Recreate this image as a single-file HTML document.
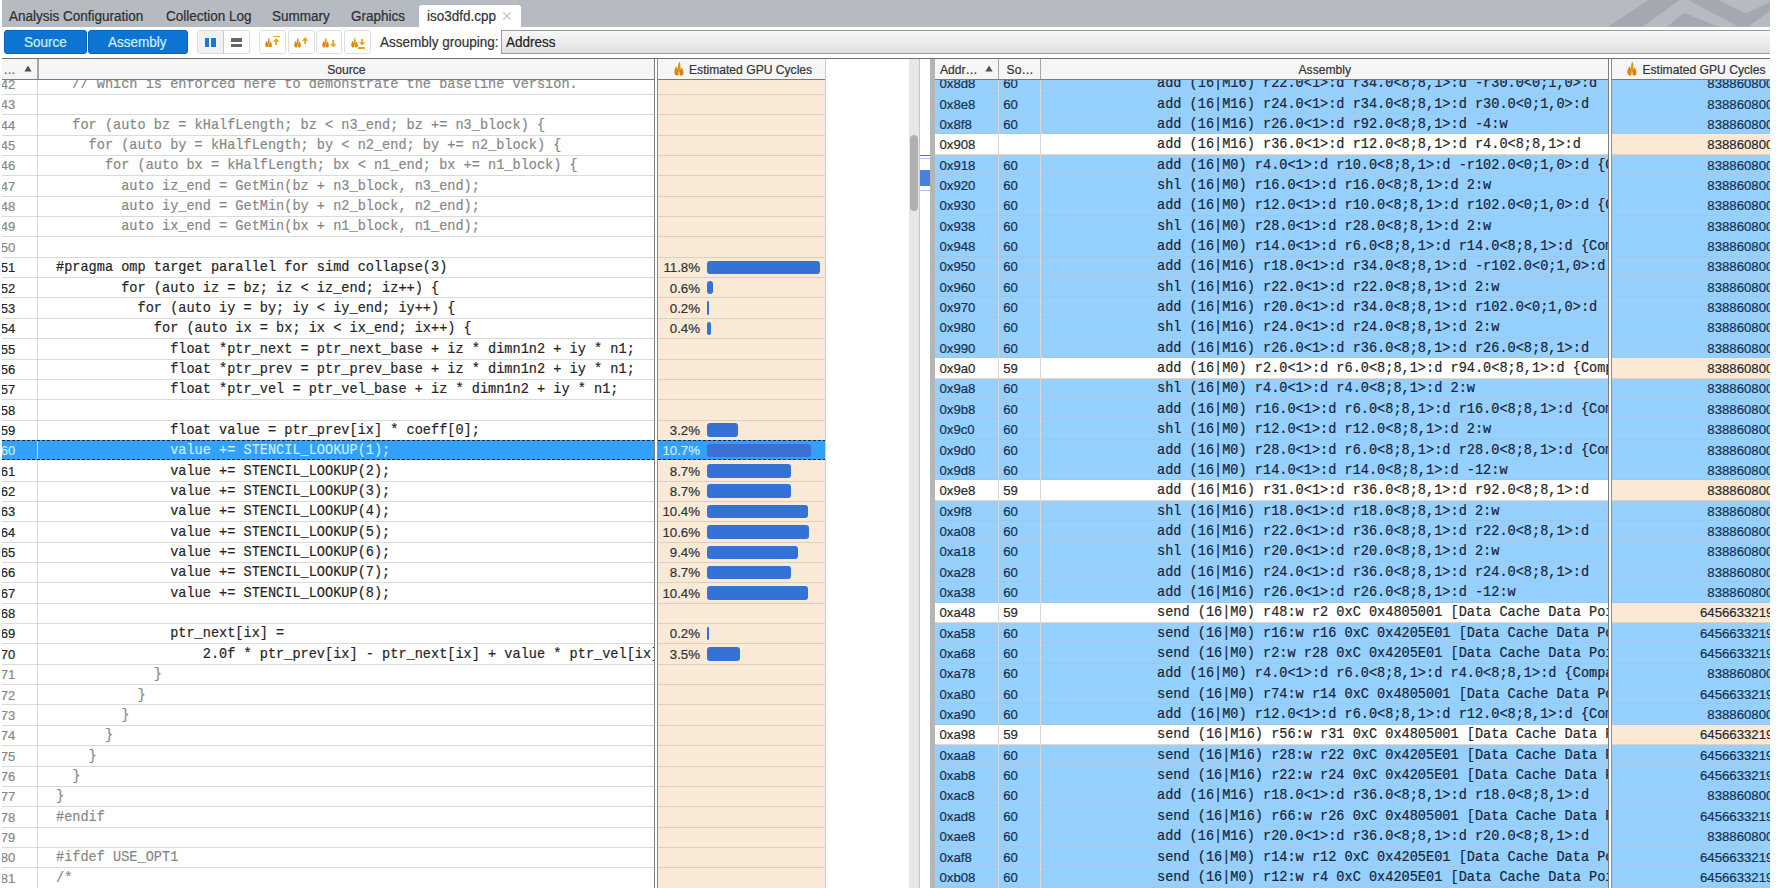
<!DOCTYPE html><html><head><meta charset="utf-8"><style>
*{margin:0;padding:0;box-sizing:border-box}
html,body{width:1776px;height:888px;overflow:hidden;background:#fff}
body{position:relative;font-family:"Liberation Sans",sans-serif;color:#333;-webkit-text-stroke-width:0.2px}
.a{position:absolute}
.t{position:absolute;white-space:pre;line-height:20px}
.m{position:absolute;white-space:pre;line-height:20px;font-family:"Liberation Mono",monospace;font-size:14.2px;transform:scaleX(0.9575);transform-origin:0 0}
.tab{position:absolute;font-size:14px;line-height:20px;color:#2c2e31;white-space:pre;transform:scaleX(0.9643);transform-origin:0 0}
.hdr{position:absolute;font-size:12.12px;color:#333;white-space:pre;line-height:20px}
</style></head><body>
<div class="a" style="left:2px;top:0;width:1768px;height:26.7px;background:#b6bac1;overflow:hidden"><svg class="a" style="left:0;top:0" width="1768" height="27" viewBox="2 0 1768 27"><polygon fill="#a4a8b0" points="1608.7,26.5 1648.4,0 1679.3,0 1642.9,26.5"/><polygon fill="#a4a8b0" points="1667.2,26.5 1683.8,12.7 1718,26.5"/><polygon fill="#a4a8b0" points="1688.2,0 1718,0 1746,13.2 1770,2 1770,11 1748,26.5 1738,26.5"/></svg></div>
<div class="tab" style="left:9.3px;top:5.6px">Analysis Configuration</div>
<div class="tab" style="left:165.5px;top:5.6px">Collection Log</div>
<div class="tab" style="left:272.3px;top:5.6px">Summary</div>
<div class="tab" style="left:351.4px;top:5.6px">Graphics</div>
<div class="a" style="left:418.7px;top:4.5px;width:102.5px;height:22.5px;background:#fff;border-radius:3px 3px 0 0"></div>
<div class="tab" style="left:426.6px;top:5.6px;color:#333">iso3dfd.cpp</div>
<svg class="a" style="left:502px;top:10.5px" width="10" height="10" viewBox="0 0 10 10"><path d="M1.3 1.3L8.7 8.7M8.7 1.3L1.3 8.7" stroke="#bdbdbd" stroke-width="1.2"/></svg>
<div class="a" style="left:3.6px;top:30.2px;width:83.4px;height:23.7px;background:#0c74d3;border:1px solid #0763b9;border-radius:3px"></div>
<div class="a" style="left:88.2px;top:30.2px;width:99.6px;height:23.7px;background:#0c74d3;border:1px solid #0763b9;border-radius:3px"></div>
<div class="tab" style="left:24.2px;top:32px;color:#d2f0ff">Source</div>
<div class="tab" style="left:108.3px;top:32px;color:#d2f0ff">Assembly</div>
<div class="a" style="left:197px;top:30px;width:53.4px;height:24px;border:1px solid #dcdcdc;border-radius:3px;background:#fff;overflow:hidden"><div class="a" style="left:0;top:0;width:26px;height:23px;background:#f1f1f1;border-right:1px solid #c9c9c9"></div></div>
<div class="a" style="left:204.5px;top:38.2px;width:4.6px;height:9px;background:#1a78d0"></div>
<div class="a" style="left:211.2px;top:38.2px;width:4.6px;height:9px;background:#1a78d0"></div>
<div class="a" style="left:231px;top:38.2px;width:11.2px;height:3.4px;background:#666"></div>
<div class="a" style="left:231px;top:43.8px;width:11.2px;height:3.4px;background:#666"></div>
<div class="a" style="left:258.8px;top:30px;width:27.1px;height:24px;border:1px solid #dfdfdf;border-radius:3px;background:#fff"></div>
<div class="a" style="left:288.3px;top:30px;width:26.3px;height:24px;border:1px solid #dfdfdf;border-radius:3px;background:#fff"></div>
<div class="a" style="left:316.3px;top:30px;width:25.9px;height:24px;border:1px solid #dfdfdf;border-radius:3px;background:#fff"></div>
<div class="a" style="left:344.4px;top:30px;width:27.0px;height:24px;border:1px solid #dfdfdf;border-radius:3px;background:#fff"></div>
<svg class="a" style="left:265.3px;top:36.6px" width="7.4" height="10.8" viewBox="0 0 11 16" preserveAspectRatio="none"><path d="M2.7 5.6C1.2 7.8 0.3 9.9 0.4 12.1C0.5 14.3 1.8 15.6 3.2 15.6C4.4 15.6 5.1 14.6 5.1 13.2C5.1 10.9 4.1 8.3 2.7 5.6Z" fill="#d58a14"/><path d="M8.1 6.6C9.6 8.8 10.3 10.9 10.2 12.7C10.1 14.5 9.1 15.6 7.8 15.6C6.6 15.6 5.8 14.6 5.8 13.2C5.8 11.3 6.8 9.2 8.1 6.6Z" fill="#d6840c"/><path d="M5.6 0.6C6.7 2.4 7.2 4.6 7 7.2C6.8 9.8 6.2 11.8 5.5 13.8C4.8 11.8 4.1 9.6 4.1 7.2C4.1 4.9 4.8 2.7 5.6 0.6Z" fill="#df9418"/><ellipse cx="5.45" cy="13.6" rx="1.1" ry="1.6" fill="#f6c45a"/></svg>
<div class="a" style="left:273px;top:35.8px;width:7px;height:1.4px;background:#e6a21a"></div>
<svg class="a" style="left:273.4px;top:37.8px" width="6.4" height="7.4" viewBox="0 0 6.4 7.4" preserveAspectRatio="none"><path d="M3.2 0L6.4 3.7H4.1V7.4H2.3V3.7H0Z" fill="#e6a21a"/></svg>
<svg class="a" style="left:293.6px;top:36.8px" width="7.4" height="10.8" viewBox="0 0 11 16" preserveAspectRatio="none"><path d="M2.7 5.6C1.2 7.8 0.3 9.9 0.4 12.1C0.5 14.3 1.8 15.6 3.2 15.6C4.4 15.6 5.1 14.6 5.1 13.2C5.1 10.9 4.1 8.3 2.7 5.6Z" fill="#d58a14"/><path d="M8.1 6.6C9.6 8.8 10.3 10.9 10.2 12.7C10.1 14.5 9.1 15.6 7.8 15.6C6.6 15.6 5.8 14.6 5.8 13.2C5.8 11.3 6.8 9.2 8.1 6.6Z" fill="#d6840c"/><path d="M5.6 0.6C6.7 2.4 7.2 4.6 7 7.2C6.8 9.8 6.2 11.8 5.5 13.8C4.8 11.8 4.1 9.6 4.1 7.2C4.1 4.9 4.8 2.7 5.6 0.6Z" fill="#df9418"/><ellipse cx="5.45" cy="13.6" rx="1.1" ry="1.6" fill="#f6c45a"/></svg>
<svg class="a" style="left:301.6px;top:37.0px" width="6.4" height="7.4" viewBox="0 0 6.4 7.4" preserveAspectRatio="none"><path d="M3.2 0L6.4 3.7H4.1V7.4H2.3V3.7H0Z" fill="#e6a21a"/></svg>
<svg class="a" style="left:322.3px;top:36.8px" width="7.4" height="10.8" viewBox="0 0 11 16" preserveAspectRatio="none"><path d="M2.7 5.6C1.2 7.8 0.3 9.9 0.4 12.1C0.5 14.3 1.8 15.6 3.2 15.6C4.4 15.6 5.1 14.6 5.1 13.2C5.1 10.9 4.1 8.3 2.7 5.6Z" fill="#d58a14"/><path d="M8.1 6.6C9.6 8.8 10.3 10.9 10.2 12.7C10.1 14.5 9.1 15.6 7.8 15.6C6.6 15.6 5.8 14.6 5.8 13.2C5.8 11.3 6.8 9.2 8.1 6.6Z" fill="#d6840c"/><path d="M5.6 0.6C6.7 2.4 7.2 4.6 7 7.2C6.8 9.8 6.2 11.8 5.5 13.8C4.8 11.8 4.1 9.6 4.1 7.2C4.1 4.9 4.8 2.7 5.6 0.6Z" fill="#df9418"/><ellipse cx="5.45" cy="13.6" rx="1.1" ry="1.6" fill="#f6c45a"/></svg>
<svg class="a" style="left:330.1px;top:39.8px" width="6.4" height="7.4" viewBox="0 0 6.4 7.4" preserveAspectRatio="none"><path d="M3.2 7.4L6.4 3.7H4.1V0H2.3V3.7H0Z" fill="#e6a21a"/></svg>
<svg class="a" style="left:350.9px;top:36.8px" width="7.4" height="10.8" viewBox="0 0 11 16" preserveAspectRatio="none"><path d="M2.7 5.6C1.2 7.8 0.3 9.9 0.4 12.1C0.5 14.3 1.8 15.6 3.2 15.6C4.4 15.6 5.1 14.6 5.1 13.2C5.1 10.9 4.1 8.3 2.7 5.6Z" fill="#d58a14"/><path d="M8.1 6.6C9.6 8.8 10.3 10.9 10.2 12.7C10.1 14.5 9.1 15.6 7.8 15.6C6.6 15.6 5.8 14.6 5.8 13.2C5.8 11.3 6.8 9.2 8.1 6.6Z" fill="#d6840c"/><path d="M5.6 0.6C6.7 2.4 7.2 4.6 7 7.2C6.8 9.8 6.2 11.8 5.5 13.8C4.8 11.8 4.1 9.6 4.1 7.2C4.1 4.9 4.8 2.7 5.6 0.6Z" fill="#df9418"/><ellipse cx="5.45" cy="13.6" rx="1.1" ry="1.6" fill="#f6c45a"/></svg>
<svg class="a" style="left:358.6px;top:39.2px" width="6.4" height="6.6" viewBox="0 0 6.4 7.4" preserveAspectRatio="none"><path d="M3.2 7.4L6.4 3.7H4.1V0H2.3V3.7H0Z" fill="#e6a21a"/></svg>
<div class="a" style="left:358.4px;top:47.2px;width:6.8px;height:1.4px;background:#e6a21a"></div>
<div class="tab" style="left:380.4px;top:32px;color:#333">Assembly grouping:</div>
<div class="a" style="left:501px;top:30px;width:1269px;height:24px;border:1px solid #9b9b9b;border-right:none;background:linear-gradient(#f8f8f8,#e0e0e0)"></div>
<div class="tab" style="left:506px;top:32px;color:#222">Address</div>
<div class="a" style="left:2px;top:58px;width:1768px;height:1px;background:#707070"></div>
<div class="a" style="left:2px;top:79.0px;width:35.50px;height:809.0px;overflow:hidden;background:#fff">
<div class="a" style="left:0;top:14.96px;width:39.5px;height:1px;background:#dadada"></div>
<div class="t" style="left:-1.3px;top:-4.00px;font-size:13px;color:#878787">42</div>
<div class="a" style="left:0;top:35.31px;width:39.5px;height:1px;background:#dadada"></div>
<div class="t" style="left:-1.3px;top:16.35px;font-size:13px;color:#878787">43</div>
<div class="a" style="left:0;top:55.66px;width:39.5px;height:1px;background:#dadada"></div>
<div class="t" style="left:-1.3px;top:36.70px;font-size:13px;color:#878787">44</div>
<div class="a" style="left:0;top:76.01px;width:39.5px;height:1px;background:#dadada"></div>
<div class="t" style="left:-1.3px;top:57.05px;font-size:13px;color:#878787">45</div>
<div class="a" style="left:0;top:96.36px;width:39.5px;height:1px;background:#dadada"></div>
<div class="t" style="left:-1.3px;top:77.40px;font-size:13px;color:#878787">46</div>
<div class="a" style="left:0;top:116.71px;width:39.5px;height:1px;background:#dadada"></div>
<div class="t" style="left:-1.3px;top:97.75px;font-size:13px;color:#878787">47</div>
<div class="a" style="left:0;top:137.06px;width:39.5px;height:1px;background:#dadada"></div>
<div class="t" style="left:-1.3px;top:118.10px;font-size:13px;color:#878787">48</div>
<div class="a" style="left:0;top:157.41px;width:39.5px;height:1px;background:#dadada"></div>
<div class="t" style="left:-1.3px;top:138.45px;font-size:13px;color:#878787">49</div>
<div class="a" style="left:0;top:177.76px;width:39.5px;height:1px;background:#dadada"></div>
<div class="t" style="left:-1.3px;top:158.80px;font-size:13px;color:#878787">50</div>
<div class="a" style="left:0;top:198.11px;width:39.5px;height:1px;background:#dadada"></div>
<div class="t" style="left:-1.3px;top:179.15px;font-size:13px;color:#252525">51</div>
<div class="a" style="left:0;top:218.46px;width:39.5px;height:1px;background:#dadada"></div>
<div class="t" style="left:-1.3px;top:199.50px;font-size:13px;color:#252525">52</div>
<div class="a" style="left:0;top:238.81px;width:39.5px;height:1px;background:#dadada"></div>
<div class="t" style="left:-1.3px;top:219.85px;font-size:13px;color:#252525">53</div>
<div class="a" style="left:0;top:259.16px;width:39.5px;height:1px;background:#dadada"></div>
<div class="t" style="left:-1.3px;top:240.20px;font-size:13px;color:#252525">54</div>
<div class="a" style="left:0;top:279.51px;width:39.5px;height:1px;background:#dadada"></div>
<div class="t" style="left:-1.3px;top:260.55px;font-size:13px;color:#252525">55</div>
<div class="a" style="left:0;top:299.86px;width:39.5px;height:1px;background:#dadada"></div>
<div class="t" style="left:-1.3px;top:280.90px;font-size:13px;color:#252525">56</div>
<div class="a" style="left:0;top:320.21px;width:39.5px;height:1px;background:#dadada"></div>
<div class="t" style="left:-1.3px;top:301.25px;font-size:13px;color:#252525">57</div>
<div class="a" style="left:0;top:340.56px;width:39.5px;height:1px;background:#dadada"></div>
<div class="t" style="left:-1.3px;top:321.60px;font-size:13px;color:#252525">58</div>
<div class="t" style="left:-1.3px;top:341.95px;font-size:13px;color:#252525">59</div>
<div class="a" style="left:0;top:361.0px;width:39.5px;height:20px;background:#33a0fb"></div>
<div class="t" style="left:-1.3px;top:362.30px;font-size:13px;color:#c9eeff">60</div>
<div class="a" style="left:0;top:401.61px;width:39.5px;height:1px;background:#dadada"></div>
<div class="t" style="left:-1.3px;top:382.65px;font-size:13px;color:#252525">61</div>
<div class="a" style="left:0;top:421.96px;width:39.5px;height:1px;background:#dadada"></div>
<div class="t" style="left:-1.3px;top:403.00px;font-size:13px;color:#252525">62</div>
<div class="a" style="left:0;top:442.31px;width:39.5px;height:1px;background:#dadada"></div>
<div class="t" style="left:-1.3px;top:423.35px;font-size:13px;color:#252525">63</div>
<div class="a" style="left:0;top:462.66px;width:39.5px;height:1px;background:#dadada"></div>
<div class="t" style="left:-1.3px;top:443.70px;font-size:13px;color:#252525">64</div>
<div class="a" style="left:0;top:483.01px;width:39.5px;height:1px;background:#dadada"></div>
<div class="t" style="left:-1.3px;top:464.05px;font-size:13px;color:#252525">65</div>
<div class="a" style="left:0;top:503.36px;width:39.5px;height:1px;background:#dadada"></div>
<div class="t" style="left:-1.3px;top:484.40px;font-size:13px;color:#252525">66</div>
<div class="a" style="left:0;top:523.71px;width:39.5px;height:1px;background:#dadada"></div>
<div class="t" style="left:-1.3px;top:504.75px;font-size:13px;color:#252525">67</div>
<div class="a" style="left:0;top:544.06px;width:39.5px;height:1px;background:#dadada"></div>
<div class="t" style="left:-1.3px;top:525.10px;font-size:13px;color:#252525">68</div>
<div class="a" style="left:0;top:564.41px;width:39.5px;height:1px;background:#dadada"></div>
<div class="t" style="left:-1.3px;top:545.45px;font-size:13px;color:#252525">69</div>
<div class="a" style="left:0;top:584.76px;width:39.5px;height:1px;background:#dadada"></div>
<div class="t" style="left:-1.3px;top:565.80px;font-size:13px;color:#252525">70</div>
<div class="a" style="left:0;top:605.11px;width:39.5px;height:1px;background:#dadada"></div>
<div class="t" style="left:-1.3px;top:586.15px;font-size:13px;color:#878787">71</div>
<div class="a" style="left:0;top:625.46px;width:39.5px;height:1px;background:#dadada"></div>
<div class="t" style="left:-1.3px;top:606.50px;font-size:13px;color:#878787">72</div>
<div class="a" style="left:0;top:645.81px;width:39.5px;height:1px;background:#dadada"></div>
<div class="t" style="left:-1.3px;top:626.85px;font-size:13px;color:#878787">73</div>
<div class="a" style="left:0;top:666.16px;width:39.5px;height:1px;background:#dadada"></div>
<div class="t" style="left:-1.3px;top:647.20px;font-size:13px;color:#878787">74</div>
<div class="a" style="left:0;top:686.51px;width:39.5px;height:1px;background:#dadada"></div>
<div class="t" style="left:-1.3px;top:667.55px;font-size:13px;color:#878787">75</div>
<div class="a" style="left:0;top:706.86px;width:39.5px;height:1px;background:#dadada"></div>
<div class="t" style="left:-1.3px;top:687.90px;font-size:13px;color:#878787">76</div>
<div class="a" style="left:0;top:727.21px;width:39.5px;height:1px;background:#dadada"></div>
<div class="t" style="left:-1.3px;top:708.25px;font-size:13px;color:#878787">77</div>
<div class="a" style="left:0;top:747.56px;width:39.5px;height:1px;background:#dadada"></div>
<div class="t" style="left:-1.3px;top:728.60px;font-size:13px;color:#878787">78</div>
<div class="a" style="left:0;top:767.91px;width:39.5px;height:1px;background:#dadada"></div>
<div class="t" style="left:-1.3px;top:748.95px;font-size:13px;color:#878787">79</div>
<div class="a" style="left:0;top:788.26px;width:39.5px;height:1px;background:#dadada"></div>
<div class="t" style="left:-1.3px;top:769.30px;font-size:13px;color:#878787">80</div>
<div class="a" style="left:0;top:808.61px;width:39.5px;height:1px;background:#dadada"></div>
<div class="t" style="left:-1.3px;top:789.65px;font-size:13px;color:#878787">81</div>
</div>
<div class="a" style="left:37.4px;top:79.0px;width:1px;height:809.0px;background:#d6d6d6"></div>
<div class="a" style="left:38.4px;top:79.0px;width:615.80px;height:809.0px;overflow:hidden;background:#fff">
<div class="a" style="left:0;top:14.96px;width:619.8000000000001px;height:1px;background:#dadada"></div>
<div class="m" style="left:18.10px;top:-5.00px;color:#878787">  // which is enforced here to demonstrate the baseline version.</div>
<div class="a" style="left:0;top:35.31px;width:619.8000000000001px;height:1px;background:#dadada"></div>
<div class="a" style="left:0;top:55.66px;width:619.8000000000001px;height:1px;background:#dadada"></div>
<div class="m" style="left:18.10px;top:35.70px;color:#878787">  for (auto bz = kHalfLength; bz &lt; n3_end; bz += n3_block) {</div>
<div class="a" style="left:0;top:76.01px;width:619.8000000000001px;height:1px;background:#dadada"></div>
<div class="m" style="left:18.10px;top:56.05px;color:#878787">    for (auto by = kHalfLength; by &lt; n2_end; by += n2_block) {</div>
<div class="a" style="left:0;top:96.36px;width:619.8000000000001px;height:1px;background:#dadada"></div>
<div class="m" style="left:18.10px;top:76.40px;color:#878787">      for (auto bx = kHalfLength; bx &lt; n1_end; bx += n1_block) {</div>
<div class="a" style="left:0;top:116.71px;width:619.8000000000001px;height:1px;background:#dadada"></div>
<div class="m" style="left:18.10px;top:96.75px;color:#878787">        auto iz_end = GetMin(bz + n3_block, n3_end);</div>
<div class="a" style="left:0;top:137.06px;width:619.8000000000001px;height:1px;background:#dadada"></div>
<div class="m" style="left:18.10px;top:117.10px;color:#878787">        auto iy_end = GetMin(by + n2_block, n2_end);</div>
<div class="a" style="left:0;top:157.41px;width:619.8000000000001px;height:1px;background:#dadada"></div>
<div class="m" style="left:18.10px;top:137.45px;color:#878787">        auto ix_end = GetMin(bx + n1_block, n1_end);</div>
<div class="a" style="left:0;top:177.76px;width:619.8000000000001px;height:1px;background:#dadada"></div>
<div class="a" style="left:0;top:198.11px;width:619.8000000000001px;height:1px;background:#dadada"></div>
<div class="m" style="left:18.10px;top:178.15px;color:#252525">#pragma omp target parallel for simd collapse(3)</div>
<div class="a" style="left:0;top:218.46px;width:619.8000000000001px;height:1px;background:#dadada"></div>
<div class="m" style="left:18.10px;top:198.50px;color:#252525">        for (auto iz = bz; iz &lt; iz_end; iz++) {</div>
<div class="a" style="left:0;top:238.81px;width:619.8000000000001px;height:1px;background:#dadada"></div>
<div class="m" style="left:18.10px;top:218.85px;color:#252525">          for (auto iy = by; iy &lt; iy_end; iy++) {</div>
<div class="a" style="left:0;top:259.16px;width:619.8000000000001px;height:1px;background:#dadada"></div>
<div class="m" style="left:18.10px;top:239.20px;color:#252525">            for (auto ix = bx; ix &lt; ix_end; ix++) {</div>
<div class="a" style="left:0;top:279.51px;width:619.8000000000001px;height:1px;background:#dadada"></div>
<div class="m" style="left:18.10px;top:259.55px;color:#252525">              float *ptr_next = ptr_next_base + iz * dimn1n2 + iy * n1;</div>
<div class="a" style="left:0;top:299.86px;width:619.8000000000001px;height:1px;background:#dadada"></div>
<div class="m" style="left:18.10px;top:279.90px;color:#252525">              float *ptr_prev = ptr_prev_base + iz * dimn1n2 + iy * n1;</div>
<div class="a" style="left:0;top:320.21px;width:619.8000000000001px;height:1px;background:#dadada"></div>
<div class="m" style="left:18.10px;top:300.25px;color:#252525">              float *ptr_vel = ptr_vel_base + iz * dimn1n2 + iy * n1;</div>
<div class="a" style="left:0;top:340.56px;width:619.8000000000001px;height:1px;background:#dadada"></div>
<div class="m" style="left:18.10px;top:340.95px;color:#252525">              float value = ptr_prev[ix] * coeff[0];</div>
<div class="a" style="left:0;top:361.0px;width:619.8000000000001px;height:20px;background:#33a0fb"></div>
<div class="m" style="left:18.10px;top:361.30px;color:#c9eeff">              value += STENCIL_LOOKUP(1);</div>
<div class="a" style="left:0;top:401.61px;width:619.8000000000001px;height:1px;background:#dadada"></div>
<div class="m" style="left:18.10px;top:381.65px;color:#252525">              value += STENCIL_LOOKUP(2);</div>
<div class="a" style="left:0;top:421.96px;width:619.8000000000001px;height:1px;background:#dadada"></div>
<div class="m" style="left:18.10px;top:402.00px;color:#252525">              value += STENCIL_LOOKUP(3);</div>
<div class="a" style="left:0;top:442.31px;width:619.8000000000001px;height:1px;background:#dadada"></div>
<div class="m" style="left:18.10px;top:422.35px;color:#252525">              value += STENCIL_LOOKUP(4);</div>
<div class="a" style="left:0;top:462.66px;width:619.8000000000001px;height:1px;background:#dadada"></div>
<div class="m" style="left:18.10px;top:442.70px;color:#252525">              value += STENCIL_LOOKUP(5);</div>
<div class="a" style="left:0;top:483.01px;width:619.8000000000001px;height:1px;background:#dadada"></div>
<div class="m" style="left:18.10px;top:463.05px;color:#252525">              value += STENCIL_LOOKUP(6);</div>
<div class="a" style="left:0;top:503.36px;width:619.8000000000001px;height:1px;background:#dadada"></div>
<div class="m" style="left:18.10px;top:483.40px;color:#252525">              value += STENCIL_LOOKUP(7);</div>
<div class="a" style="left:0;top:523.71px;width:619.8000000000001px;height:1px;background:#dadada"></div>
<div class="m" style="left:18.10px;top:503.75px;color:#252525">              value += STENCIL_LOOKUP(8);</div>
<div class="a" style="left:0;top:544.06px;width:619.8000000000001px;height:1px;background:#dadada"></div>
<div class="a" style="left:0;top:564.41px;width:619.8000000000001px;height:1px;background:#dadada"></div>
<div class="m" style="left:18.10px;top:544.45px;color:#252525">              ptr_next[ix] =</div>
<div class="a" style="left:0;top:584.76px;width:619.8000000000001px;height:1px;background:#dadada"></div>
<div class="m" style="left:18.10px;top:564.80px;color:#252525">                  2.0f * ptr_prev[ix] - ptr_next[ix] + value * ptr_vel[ix];</div>
<div class="a" style="left:0;top:605.11px;width:619.8000000000001px;height:1px;background:#dadada"></div>
<div class="m" style="left:18.10px;top:585.15px;color:#878787">            }</div>
<div class="a" style="left:0;top:625.46px;width:619.8000000000001px;height:1px;background:#dadada"></div>
<div class="m" style="left:18.10px;top:605.50px;color:#878787">          }</div>
<div class="a" style="left:0;top:645.81px;width:619.8000000000001px;height:1px;background:#dadada"></div>
<div class="m" style="left:18.10px;top:625.85px;color:#878787">        }</div>
<div class="a" style="left:0;top:666.16px;width:619.8000000000001px;height:1px;background:#dadada"></div>
<div class="m" style="left:18.10px;top:646.20px;color:#878787">      }</div>
<div class="a" style="left:0;top:686.51px;width:619.8000000000001px;height:1px;background:#dadada"></div>
<div class="m" style="left:18.10px;top:666.55px;color:#878787">    }</div>
<div class="a" style="left:0;top:706.86px;width:619.8000000000001px;height:1px;background:#dadada"></div>
<div class="m" style="left:18.10px;top:686.90px;color:#878787">  }</div>
<div class="a" style="left:0;top:727.21px;width:619.8000000000001px;height:1px;background:#dadada"></div>
<div class="m" style="left:18.10px;top:707.25px;color:#878787">}</div>
<div class="a" style="left:0;top:747.56px;width:619.8000000000001px;height:1px;background:#dadada"></div>
<div class="m" style="left:18.10px;top:727.60px;color:#878787">#endif</div>
<div class="a" style="left:0;top:767.91px;width:619.8000000000001px;height:1px;background:#dadada"></div>
<div class="a" style="left:0;top:788.26px;width:619.8000000000001px;height:1px;background:#dadada"></div>
<div class="m" style="left:18.10px;top:768.30px;color:#878787">#ifdef USE_OPT1</div>
<div class="a" style="left:0;top:808.61px;width:619.8000000000001px;height:1px;background:#dadada"></div>
<div class="m" style="left:18.10px;top:788.65px;color:#878787">/*</div>
</div>
<div class="a" style="left:654.2px;top:59.0px;width:1px;height:829.0px;background:#7c7c7c"></div>
<div class="a" style="left:657.2px;top:59.0px;width:1px;height:829.0px;background:#8e8e8e"></div>
<div class="a" style="left:658.2px;top:79.0px;width:166.80px;height:809.0px;overflow:hidden;background:#f9e9d7">
<div class="a" style="left:0;top:14.96px;width:170.79999999999995px;height:1px;background:#dfd0bd"></div>
<div class="a" style="left:0;top:35.31px;width:170.79999999999995px;height:1px;background:#dfd0bd"></div>
<div class="a" style="left:0;top:55.66px;width:170.79999999999995px;height:1px;background:#dfd0bd"></div>
<div class="a" style="left:0;top:76.01px;width:170.79999999999995px;height:1px;background:#dfd0bd"></div>
<div class="a" style="left:0;top:96.36px;width:170.79999999999995px;height:1px;background:#dfd0bd"></div>
<div class="a" style="left:0;top:116.71px;width:170.79999999999995px;height:1px;background:#dfd0bd"></div>
<div class="a" style="left:0;top:137.06px;width:170.79999999999995px;height:1px;background:#dfd0bd"></div>
<div class="a" style="left:0;top:157.41px;width:170.79999999999995px;height:1px;background:#dfd0bd"></div>
<div class="a" style="left:0;top:177.76px;width:170.79999999999995px;height:1px;background:#dfd0bd"></div>
<div class="a" style="left:0;top:198.11px;width:170.79999999999995px;height:1px;background:#dfd0bd"></div>
<div class="t" style="left:-20px;width:61.8px;text-align:right;top:179.15px;font-size:13.25px;color:#333">11.8%</div><div class="a" style="left:48.5px;top:181.61px;width:113.3px;height:13.4px;background:#3572d5;border-radius:3px"></div>
<div class="a" style="left:0;top:218.46px;width:170.79999999999995px;height:1px;background:#dfd0bd"></div>
<div class="t" style="left:-20px;width:61.8px;text-align:right;top:199.50px;font-size:13.25px;color:#333">0.6%</div><div class="a" style="left:48.5px;top:201.96px;width:6.6px;height:13.4px;background:#3572d5;border-radius:3px"></div>
<div class="a" style="left:0;top:238.81px;width:170.79999999999995px;height:1px;background:#dfd0bd"></div>
<div class="t" style="left:-20px;width:61.8px;text-align:right;top:219.85px;font-size:13.25px;color:#333">0.2%</div><div class="a" style="left:48.5px;top:222.31px;width:2.0px;height:13.4px;background:#3572d5;border-radius:3px"></div>
<div class="a" style="left:0;top:259.16px;width:170.79999999999995px;height:1px;background:#dfd0bd"></div>
<div class="t" style="left:-20px;width:61.8px;text-align:right;top:240.20px;font-size:13.25px;color:#333">0.4%</div><div class="a" style="left:48.5px;top:242.66px;width:4.0px;height:13.4px;background:#3572d5;border-radius:3px"></div>
<div class="a" style="left:0;top:279.51px;width:170.79999999999995px;height:1px;background:#dfd0bd"></div>
<div class="a" style="left:0;top:299.86px;width:170.79999999999995px;height:1px;background:#dfd0bd"></div>
<div class="a" style="left:0;top:320.21px;width:170.79999999999995px;height:1px;background:#dfd0bd"></div>
<div class="a" style="left:0;top:340.56px;width:170.79999999999995px;height:1px;background:#dfd0bd"></div>
<div class="t" style="left:-20px;width:61.8px;text-align:right;top:341.95px;font-size:13.25px;color:#333">3.2%</div><div class="a" style="left:48.5px;top:344.41px;width:30.9px;height:13.4px;background:#3572d5;border-radius:3px"></div>
<div class="a" style="left:0;top:361.0px;width:170.79999999999995px;height:20px;background:#33a0fb"></div>
<div class="t" style="left:-20px;width:61.8px;text-align:right;top:362.30px;font-size:13.25px;color:#c9eeff">10.7%</div><div class="a" style="left:48.5px;top:364.76px;width:104.3px;height:13.4px;background:#3c70d2;border-radius:3px"></div>
<div class="a" style="left:0;top:401.61px;width:170.79999999999995px;height:1px;background:#dfd0bd"></div>
<div class="t" style="left:-20px;width:61.8px;text-align:right;top:382.65px;font-size:13.25px;color:#333">8.7%</div><div class="a" style="left:48.5px;top:385.11px;width:84.3px;height:13.4px;background:#3572d5;border-radius:3px"></div>
<div class="a" style="left:0;top:421.96px;width:170.79999999999995px;height:1px;background:#dfd0bd"></div>
<div class="t" style="left:-20px;width:61.8px;text-align:right;top:403.00px;font-size:13.25px;color:#333">8.7%</div><div class="a" style="left:48.5px;top:405.46px;width:84.3px;height:13.4px;background:#3572d5;border-radius:3px"></div>
<div class="a" style="left:0;top:442.31px;width:170.79999999999995px;height:1px;background:#dfd0bd"></div>
<div class="t" style="left:-20px;width:61.8px;text-align:right;top:423.35px;font-size:13.25px;color:#333">10.4%</div><div class="a" style="left:48.5px;top:425.81px;width:101.8px;height:13.4px;background:#3572d5;border-radius:3px"></div>
<div class="a" style="left:0;top:462.66px;width:170.79999999999995px;height:1px;background:#dfd0bd"></div>
<div class="t" style="left:-20px;width:61.8px;text-align:right;top:443.70px;font-size:13.25px;color:#333">10.6%</div><div class="a" style="left:48.5px;top:446.16px;width:102.4px;height:13.4px;background:#3572d5;border-radius:3px"></div>
<div class="a" style="left:0;top:483.01px;width:170.79999999999995px;height:1px;background:#dfd0bd"></div>
<div class="t" style="left:-20px;width:61.8px;text-align:right;top:464.05px;font-size:13.25px;color:#333">9.4%</div><div class="a" style="left:48.5px;top:466.51px;width:91.8px;height:13.4px;background:#3572d5;border-radius:3px"></div>
<div class="a" style="left:0;top:503.36px;width:170.79999999999995px;height:1px;background:#dfd0bd"></div>
<div class="t" style="left:-20px;width:61.8px;text-align:right;top:484.40px;font-size:13.25px;color:#333">8.7%</div><div class="a" style="left:48.5px;top:486.86px;width:84.3px;height:13.4px;background:#3572d5;border-radius:3px"></div>
<div class="a" style="left:0;top:523.71px;width:170.79999999999995px;height:1px;background:#dfd0bd"></div>
<div class="t" style="left:-20px;width:61.8px;text-align:right;top:504.75px;font-size:13.25px;color:#333">10.4%</div><div class="a" style="left:48.5px;top:507.21px;width:101.8px;height:13.4px;background:#3572d5;border-radius:3px"></div>
<div class="a" style="left:0;top:544.06px;width:170.79999999999995px;height:1px;background:#dfd0bd"></div>
<div class="a" style="left:0;top:564.41px;width:170.79999999999995px;height:1px;background:#dfd0bd"></div>
<div class="t" style="left:-20px;width:61.8px;text-align:right;top:545.45px;font-size:13.25px;color:#333">0.2%</div><div class="a" style="left:48.5px;top:547.91px;width:2.0px;height:13.4px;background:#3572d5;border-radius:3px"></div>
<div class="a" style="left:0;top:584.76px;width:170.79999999999995px;height:1px;background:#dfd0bd"></div>
<div class="t" style="left:-20px;width:61.8px;text-align:right;top:565.80px;font-size:13.25px;color:#333">3.5%</div><div class="a" style="left:48.5px;top:568.26px;width:33.3px;height:13.4px;background:#3572d5;border-radius:3px"></div>
<div class="a" style="left:0;top:605.11px;width:170.79999999999995px;height:1px;background:#dfd0bd"></div>
<div class="a" style="left:0;top:625.46px;width:170.79999999999995px;height:1px;background:#dfd0bd"></div>
<div class="a" style="left:0;top:645.81px;width:170.79999999999995px;height:1px;background:#dfd0bd"></div>
<div class="a" style="left:0;top:666.16px;width:170.79999999999995px;height:1px;background:#dfd0bd"></div>
<div class="a" style="left:0;top:686.51px;width:170.79999999999995px;height:1px;background:#dfd0bd"></div>
<div class="a" style="left:0;top:706.86px;width:170.79999999999995px;height:1px;background:#dfd0bd"></div>
<div class="a" style="left:0;top:727.21px;width:170.79999999999995px;height:1px;background:#dfd0bd"></div>
<div class="a" style="left:0;top:747.56px;width:170.79999999999995px;height:1px;background:#dfd0bd"></div>
<div class="a" style="left:0;top:767.91px;width:170.79999999999995px;height:1px;background:#dfd0bd"></div>
<div class="a" style="left:0;top:788.26px;width:170.79999999999995px;height:1px;background:#dfd0bd"></div>
<div class="a" style="left:0;top:808.61px;width:170.79999999999995px;height:1px;background:#dfd0bd"></div>
</div>
<div class="a" style="left:825px;top:59.0px;width:1px;height:829.0px;background:#cdcdcd"></div>
<div class="a" style="left:2px;top:440px;width:652.2px;height:1px;background:repeating-linear-gradient(90deg,#15263a 0 3px,transparent 3px 5px)"></div>
<div class="a" style="left:658.2px;top:440px;width:166.8px;height:1px;background:repeating-linear-gradient(90deg,#15263a 0 3px,transparent 3px 5px)"></div>
<div class="a" style="left:2px;top:459px;width:652.2px;height:1px;background:repeating-linear-gradient(90deg,#15263a 0 3px,transparent 3px 5px)"></div>
<div class="a" style="left:658.2px;top:459px;width:166.8px;height:1px;background:repeating-linear-gradient(90deg,#15263a 0 3px,transparent 3px 5px)"></div>
<div class="a" style="left:2px;top:59.0px;width:652.2px;height:21.0px;background:#f5f5f5;border-bottom:1px solid #7c7c7c"></div>
<div class="a" style="left:658.2px;top:59.0px;width:166.8px;height:21.0px;background:#f5f5f5;border-bottom:1px solid #7c7c7c"></div>
<div class="a" style="left:37.2px;top:59.0px;width:1.4px;height:20.0px;background:#a6a6a6"></div>
<div class="hdr" style="left:3.5px;top:60px;color:#666">…</div>
<svg class="a" style="left:24px;top:65.4px" width="8" height="7" viewBox="0 0 8 7"><path d="M4 0.4L7.6 6.6H0.4Z" fill="#505050"/></svg>
<div class="hdr" style="left:38.4px;width:616px;text-align:center;top:60px">Source</div>
<svg class="a" style="left:674.2px;top:60.8px" width="10.2" height="15" viewBox="0 0 11 16" preserveAspectRatio="none"><path d="M2.7 5.6C1.2 7.8 0.3 9.9 0.4 12.1C0.5 14.3 1.8 15.6 3.2 15.6C4.4 15.6 5.1 14.6 5.1 13.2C5.1 10.9 4.1 8.3 2.7 5.6Z" fill="#d58a14"/><path d="M8.1 6.6C9.6 8.8 10.3 10.9 10.2 12.7C10.1 14.5 9.1 15.6 7.8 15.6C6.6 15.6 5.8 14.6 5.8 13.2C5.8 11.3 6.8 9.2 8.1 6.6Z" fill="#d6840c"/><path d="M5.6 0.6C6.7 2.4 7.2 4.6 7 7.2C6.8 9.8 6.2 11.8 5.5 13.8C4.8 11.8 4.1 9.6 4.1 7.2C4.1 4.9 4.8 2.7 5.6 0.6Z" fill="#df9418"/><ellipse cx="5.45" cy="13.6" rx="1.1" ry="1.6" fill="#f6c45a"/></svg>
<div class="hdr" style="left:689px;top:60px">Estimated GPU Cycles</div>
<div class="a" style="left:909px;top:59.0px;width:10.5px;height:829.0px;background:#e7e7e7"></div>
<div class="a" style="left:918.8px;top:59.0px;width:1px;height:829.0px;background:#c4c4c4"></div>
<div class="a" style="left:909.6px;top:135px;width:8.8px;height:76px;background:#b0b0b0;border-radius:4.4px"></div>
<div class="a" style="left:920px;top:154.5px;width:10px;height:1.6px;background:#3a6fd6"></div>
<div class="a" style="left:920px;top:157.6px;width:10px;height:1.4px;background:#afcbf0"></div>
<div class="a" style="left:920px;top:169.5px;width:10px;height:16.5px;background:#4a80de"></div>
<div class="a" style="left:920px;top:189.6px;width:10px;height:1.4px;background:#b4c4ee"></div>
<div class="a" style="left:930px;top:59.0px;width:5px;height:829.0px;background:#b5b5b5"></div>
<div class="a" style="left:935px;top:79.0px;width:63.20px;height:809.0px;overflow:hidden;background:#96d0ff">
<div class="a" style="left:0;top:13.75px;width:67.20000000000005px;height:1px;background:#a2c6e6"></div>
<div class="t" style="left:4.5px;top:-4.80px;font-size:13.2px;color:#14304f">0x8d8</div>
<div class="a" style="left:0;top:34.10px;width:67.20000000000005px;height:1px;background:#a2c6e6"></div>
<div class="t" style="left:4.5px;top:15.55px;font-size:13.2px;color:#14304f">0x8e8</div>
<div class="a" style="left:0;top:54.45px;width:67.20000000000005px;height:1px;background:#a2c6e6"></div>
<div class="t" style="left:4.5px;top:35.90px;font-size:13.2px;color:#14304f">0x8f8</div>
<div class="a" style="left:0;top:55.45px;width:67.20000000000005px;height:20.35px;background:#fff"></div>
<div class="a" style="left:0;top:74.80px;width:67.20000000000005px;height:1px;background:#dadada"></div>
<div class="t" style="left:4.5px;top:56.25px;font-size:13.2px;color:#2a2a2a">0x908</div>
<div class="a" style="left:0;top:95.15px;width:67.20000000000005px;height:1px;background:#a2c6e6"></div>
<div class="t" style="left:4.5px;top:76.60px;font-size:13.2px;color:#14304f">0x918</div>
<div class="a" style="left:0;top:115.50px;width:67.20000000000005px;height:1px;background:#a2c6e6"></div>
<div class="t" style="left:4.5px;top:96.95px;font-size:13.2px;color:#14304f">0x920</div>
<div class="a" style="left:0;top:135.85px;width:67.20000000000005px;height:1px;background:#a2c6e6"></div>
<div class="t" style="left:4.5px;top:117.30px;font-size:13.2px;color:#14304f">0x930</div>
<div class="a" style="left:0;top:156.20px;width:67.20000000000005px;height:1px;background:#a2c6e6"></div>
<div class="t" style="left:4.5px;top:137.65px;font-size:13.2px;color:#14304f">0x938</div>
<div class="a" style="left:0;top:176.55px;width:67.20000000000005px;height:1px;background:#a2c6e6"></div>
<div class="t" style="left:4.5px;top:158.00px;font-size:13.2px;color:#14304f">0x948</div>
<div class="a" style="left:0;top:196.90px;width:67.20000000000005px;height:1px;background:#a2c6e6"></div>
<div class="t" style="left:4.5px;top:178.35px;font-size:13.2px;color:#14304f">0x950</div>
<div class="a" style="left:0;top:217.25px;width:67.20000000000005px;height:1px;background:#a2c6e6"></div>
<div class="t" style="left:4.5px;top:198.70px;font-size:13.2px;color:#14304f">0x960</div>
<div class="a" style="left:0;top:237.60px;width:67.20000000000005px;height:1px;background:#a2c6e6"></div>
<div class="t" style="left:4.5px;top:219.05px;font-size:13.2px;color:#14304f">0x970</div>
<div class="a" style="left:0;top:257.95px;width:67.20000000000005px;height:1px;background:#a2c6e6"></div>
<div class="t" style="left:4.5px;top:239.40px;font-size:13.2px;color:#14304f">0x980</div>
<div class="a" style="left:0;top:278.30px;width:67.20000000000005px;height:1px;background:#a2c6e6"></div>
<div class="t" style="left:4.5px;top:259.75px;font-size:13.2px;color:#14304f">0x990</div>
<div class="a" style="left:0;top:279.30px;width:67.20000000000005px;height:20.35px;background:#fff"></div>
<div class="a" style="left:0;top:298.65px;width:67.20000000000005px;height:1px;background:#dadada"></div>
<div class="t" style="left:4.5px;top:280.10px;font-size:13.2px;color:#2a2a2a">0x9a0</div>
<div class="a" style="left:0;top:319.00px;width:67.20000000000005px;height:1px;background:#a2c6e6"></div>
<div class="t" style="left:4.5px;top:300.45px;font-size:13.2px;color:#14304f">0x9a8</div>
<div class="a" style="left:0;top:339.35px;width:67.20000000000005px;height:1px;background:#a2c6e6"></div>
<div class="t" style="left:4.5px;top:320.80px;font-size:13.2px;color:#14304f">0x9b8</div>
<div class="a" style="left:0;top:359.70px;width:67.20000000000005px;height:1px;background:#a2c6e6"></div>
<div class="t" style="left:4.5px;top:341.15px;font-size:13.2px;color:#14304f">0x9c0</div>
<div class="a" style="left:0;top:380.05px;width:67.20000000000005px;height:1px;background:#a2c6e6"></div>
<div class="t" style="left:4.5px;top:361.50px;font-size:13.2px;color:#14304f">0x9d0</div>
<div class="a" style="left:0;top:400.40px;width:67.20000000000005px;height:1px;background:#a2c6e6"></div>
<div class="t" style="left:4.5px;top:381.85px;font-size:13.2px;color:#14304f">0x9d8</div>
<div class="a" style="left:0;top:401.40px;width:67.20000000000005px;height:20.35px;background:#fff"></div>
<div class="a" style="left:0;top:420.75px;width:67.20000000000005px;height:1px;background:#dadada"></div>
<div class="t" style="left:4.5px;top:402.20px;font-size:13.2px;color:#2a2a2a">0x9e8</div>
<div class="a" style="left:0;top:441.10px;width:67.20000000000005px;height:1px;background:#a2c6e6"></div>
<div class="t" style="left:4.5px;top:422.55px;font-size:13.2px;color:#14304f">0x9f8</div>
<div class="a" style="left:0;top:461.45px;width:67.20000000000005px;height:1px;background:#a2c6e6"></div>
<div class="t" style="left:4.5px;top:442.90px;font-size:13.2px;color:#14304f">0xa08</div>
<div class="a" style="left:0;top:481.80px;width:67.20000000000005px;height:1px;background:#a2c6e6"></div>
<div class="t" style="left:4.5px;top:463.25px;font-size:13.2px;color:#14304f">0xa18</div>
<div class="a" style="left:0;top:502.15px;width:67.20000000000005px;height:1px;background:#a2c6e6"></div>
<div class="t" style="left:4.5px;top:483.60px;font-size:13.2px;color:#14304f">0xa28</div>
<div class="a" style="left:0;top:522.50px;width:67.20000000000005px;height:1px;background:#a2c6e6"></div>
<div class="t" style="left:4.5px;top:503.95px;font-size:13.2px;color:#14304f">0xa38</div>
<div class="a" style="left:0;top:523.50px;width:67.20000000000005px;height:20.35px;background:#fff"></div>
<div class="a" style="left:0;top:542.85px;width:67.20000000000005px;height:1px;background:#dadada"></div>
<div class="t" style="left:4.5px;top:524.30px;font-size:13.2px;color:#2a2a2a">0xa48</div>
<div class="a" style="left:0;top:563.20px;width:67.20000000000005px;height:1px;background:#a2c6e6"></div>
<div class="t" style="left:4.5px;top:544.65px;font-size:13.2px;color:#14304f">0xa58</div>
<div class="a" style="left:0;top:583.55px;width:67.20000000000005px;height:1px;background:#a2c6e6"></div>
<div class="t" style="left:4.5px;top:565.00px;font-size:13.2px;color:#14304f">0xa68</div>
<div class="a" style="left:0;top:603.90px;width:67.20000000000005px;height:1px;background:#a2c6e6"></div>
<div class="t" style="left:4.5px;top:585.35px;font-size:13.2px;color:#14304f">0xa78</div>
<div class="a" style="left:0;top:624.25px;width:67.20000000000005px;height:1px;background:#a2c6e6"></div>
<div class="t" style="left:4.5px;top:605.70px;font-size:13.2px;color:#14304f">0xa80</div>
<div class="a" style="left:0;top:644.60px;width:67.20000000000005px;height:1px;background:#a2c6e6"></div>
<div class="t" style="left:4.5px;top:626.05px;font-size:13.2px;color:#14304f">0xa90</div>
<div class="a" style="left:0;top:645.60px;width:67.20000000000005px;height:20.35px;background:#fff"></div>
<div class="a" style="left:0;top:664.95px;width:67.20000000000005px;height:1px;background:#dadada"></div>
<div class="t" style="left:4.5px;top:646.40px;font-size:13.2px;color:#2a2a2a">0xa98</div>
<div class="a" style="left:0;top:685.30px;width:67.20000000000005px;height:1px;background:#a2c6e6"></div>
<div class="t" style="left:4.5px;top:666.75px;font-size:13.2px;color:#14304f">0xaa8</div>
<div class="a" style="left:0;top:705.65px;width:67.20000000000005px;height:1px;background:#a2c6e6"></div>
<div class="t" style="left:4.5px;top:687.10px;font-size:13.2px;color:#14304f">0xab8</div>
<div class="a" style="left:0;top:726.00px;width:67.20000000000005px;height:1px;background:#a2c6e6"></div>
<div class="t" style="left:4.5px;top:707.45px;font-size:13.2px;color:#14304f">0xac8</div>
<div class="a" style="left:0;top:746.35px;width:67.20000000000005px;height:1px;background:#a2c6e6"></div>
<div class="t" style="left:4.5px;top:727.80px;font-size:13.2px;color:#14304f">0xad8</div>
<div class="a" style="left:0;top:766.70px;width:67.20000000000005px;height:1px;background:#a2c6e6"></div>
<div class="t" style="left:4.5px;top:748.15px;font-size:13.2px;color:#14304f">0xae8</div>
<div class="a" style="left:0;top:787.05px;width:67.20000000000005px;height:1px;background:#a2c6e6"></div>
<div class="t" style="left:4.5px;top:768.50px;font-size:13.2px;color:#14304f">0xaf8</div>
<div class="a" style="left:0;top:807.40px;width:67.20000000000005px;height:1px;background:#a2c6e6"></div>
<div class="t" style="left:4.5px;top:788.85px;font-size:13.2px;color:#14304f">0xb08</div>
</div>
<div class="a" style="left:998.2px;top:79.0px;width:1px;height:809.0px;background:rgba(190,190,190,0.6)"></div>
<div class="a" style="left:999.2px;top:79.0px;width:41.00px;height:809.0px;overflow:hidden;background:#96d0ff">
<div class="a" style="left:0;top:13.75px;width:45.0px;height:1px;background:#a2c6e6"></div>
<div class="t" style="left:4px;top:-4.80px;font-size:13.2px;color:#14304f">60</div>
<div class="a" style="left:0;top:34.10px;width:45.0px;height:1px;background:#a2c6e6"></div>
<div class="t" style="left:4px;top:15.55px;font-size:13.2px;color:#14304f">60</div>
<div class="a" style="left:0;top:54.45px;width:45.0px;height:1px;background:#a2c6e6"></div>
<div class="t" style="left:4px;top:35.90px;font-size:13.2px;color:#14304f">60</div>
<div class="a" style="left:0;top:55.45px;width:45.0px;height:20.35px;background:#fff"></div>
<div class="a" style="left:0;top:74.80px;width:45.0px;height:1px;background:#dadada"></div>
<div class="t" style="left:4px;top:56.25px;font-size:13.2px;color:#2a2a2a"></div>
<div class="a" style="left:0;top:95.15px;width:45.0px;height:1px;background:#a2c6e6"></div>
<div class="t" style="left:4px;top:76.60px;font-size:13.2px;color:#14304f">60</div>
<div class="a" style="left:0;top:115.50px;width:45.0px;height:1px;background:#a2c6e6"></div>
<div class="t" style="left:4px;top:96.95px;font-size:13.2px;color:#14304f">60</div>
<div class="a" style="left:0;top:135.85px;width:45.0px;height:1px;background:#a2c6e6"></div>
<div class="t" style="left:4px;top:117.30px;font-size:13.2px;color:#14304f">60</div>
<div class="a" style="left:0;top:156.20px;width:45.0px;height:1px;background:#a2c6e6"></div>
<div class="t" style="left:4px;top:137.65px;font-size:13.2px;color:#14304f">60</div>
<div class="a" style="left:0;top:176.55px;width:45.0px;height:1px;background:#a2c6e6"></div>
<div class="t" style="left:4px;top:158.00px;font-size:13.2px;color:#14304f">60</div>
<div class="a" style="left:0;top:196.90px;width:45.0px;height:1px;background:#a2c6e6"></div>
<div class="t" style="left:4px;top:178.35px;font-size:13.2px;color:#14304f">60</div>
<div class="a" style="left:0;top:217.25px;width:45.0px;height:1px;background:#a2c6e6"></div>
<div class="t" style="left:4px;top:198.70px;font-size:13.2px;color:#14304f">60</div>
<div class="a" style="left:0;top:237.60px;width:45.0px;height:1px;background:#a2c6e6"></div>
<div class="t" style="left:4px;top:219.05px;font-size:13.2px;color:#14304f">60</div>
<div class="a" style="left:0;top:257.95px;width:45.0px;height:1px;background:#a2c6e6"></div>
<div class="t" style="left:4px;top:239.40px;font-size:13.2px;color:#14304f">60</div>
<div class="a" style="left:0;top:278.30px;width:45.0px;height:1px;background:#a2c6e6"></div>
<div class="t" style="left:4px;top:259.75px;font-size:13.2px;color:#14304f">60</div>
<div class="a" style="left:0;top:279.30px;width:45.0px;height:20.35px;background:#fff"></div>
<div class="a" style="left:0;top:298.65px;width:45.0px;height:1px;background:#dadada"></div>
<div class="t" style="left:4px;top:280.10px;font-size:13.2px;color:#2a2a2a">59</div>
<div class="a" style="left:0;top:319.00px;width:45.0px;height:1px;background:#a2c6e6"></div>
<div class="t" style="left:4px;top:300.45px;font-size:13.2px;color:#14304f">60</div>
<div class="a" style="left:0;top:339.35px;width:45.0px;height:1px;background:#a2c6e6"></div>
<div class="t" style="left:4px;top:320.80px;font-size:13.2px;color:#14304f">60</div>
<div class="a" style="left:0;top:359.70px;width:45.0px;height:1px;background:#a2c6e6"></div>
<div class="t" style="left:4px;top:341.15px;font-size:13.2px;color:#14304f">60</div>
<div class="a" style="left:0;top:380.05px;width:45.0px;height:1px;background:#a2c6e6"></div>
<div class="t" style="left:4px;top:361.50px;font-size:13.2px;color:#14304f">60</div>
<div class="a" style="left:0;top:400.40px;width:45.0px;height:1px;background:#a2c6e6"></div>
<div class="t" style="left:4px;top:381.85px;font-size:13.2px;color:#14304f">60</div>
<div class="a" style="left:0;top:401.40px;width:45.0px;height:20.35px;background:#fff"></div>
<div class="a" style="left:0;top:420.75px;width:45.0px;height:1px;background:#dadada"></div>
<div class="t" style="left:4px;top:402.20px;font-size:13.2px;color:#2a2a2a">59</div>
<div class="a" style="left:0;top:441.10px;width:45.0px;height:1px;background:#a2c6e6"></div>
<div class="t" style="left:4px;top:422.55px;font-size:13.2px;color:#14304f">60</div>
<div class="a" style="left:0;top:461.45px;width:45.0px;height:1px;background:#a2c6e6"></div>
<div class="t" style="left:4px;top:442.90px;font-size:13.2px;color:#14304f">60</div>
<div class="a" style="left:0;top:481.80px;width:45.0px;height:1px;background:#a2c6e6"></div>
<div class="t" style="left:4px;top:463.25px;font-size:13.2px;color:#14304f">60</div>
<div class="a" style="left:0;top:502.15px;width:45.0px;height:1px;background:#a2c6e6"></div>
<div class="t" style="left:4px;top:483.60px;font-size:13.2px;color:#14304f">60</div>
<div class="a" style="left:0;top:522.50px;width:45.0px;height:1px;background:#a2c6e6"></div>
<div class="t" style="left:4px;top:503.95px;font-size:13.2px;color:#14304f">60</div>
<div class="a" style="left:0;top:523.50px;width:45.0px;height:20.35px;background:#fff"></div>
<div class="a" style="left:0;top:542.85px;width:45.0px;height:1px;background:#dadada"></div>
<div class="t" style="left:4px;top:524.30px;font-size:13.2px;color:#2a2a2a">59</div>
<div class="a" style="left:0;top:563.20px;width:45.0px;height:1px;background:#a2c6e6"></div>
<div class="t" style="left:4px;top:544.65px;font-size:13.2px;color:#14304f">60</div>
<div class="a" style="left:0;top:583.55px;width:45.0px;height:1px;background:#a2c6e6"></div>
<div class="t" style="left:4px;top:565.00px;font-size:13.2px;color:#14304f">60</div>
<div class="a" style="left:0;top:603.90px;width:45.0px;height:1px;background:#a2c6e6"></div>
<div class="t" style="left:4px;top:585.35px;font-size:13.2px;color:#14304f">60</div>
<div class="a" style="left:0;top:624.25px;width:45.0px;height:1px;background:#a2c6e6"></div>
<div class="t" style="left:4px;top:605.70px;font-size:13.2px;color:#14304f">60</div>
<div class="a" style="left:0;top:644.60px;width:45.0px;height:1px;background:#a2c6e6"></div>
<div class="t" style="left:4px;top:626.05px;font-size:13.2px;color:#14304f">60</div>
<div class="a" style="left:0;top:645.60px;width:45.0px;height:20.35px;background:#fff"></div>
<div class="a" style="left:0;top:664.95px;width:45.0px;height:1px;background:#dadada"></div>
<div class="t" style="left:4px;top:646.40px;font-size:13.2px;color:#2a2a2a">59</div>
<div class="a" style="left:0;top:685.30px;width:45.0px;height:1px;background:#a2c6e6"></div>
<div class="t" style="left:4px;top:666.75px;font-size:13.2px;color:#14304f">60</div>
<div class="a" style="left:0;top:705.65px;width:45.0px;height:1px;background:#a2c6e6"></div>
<div class="t" style="left:4px;top:687.10px;font-size:13.2px;color:#14304f">60</div>
<div class="a" style="left:0;top:726.00px;width:45.0px;height:1px;background:#a2c6e6"></div>
<div class="t" style="left:4px;top:707.45px;font-size:13.2px;color:#14304f">60</div>
<div class="a" style="left:0;top:746.35px;width:45.0px;height:1px;background:#a2c6e6"></div>
<div class="t" style="left:4px;top:727.80px;font-size:13.2px;color:#14304f">60</div>
<div class="a" style="left:0;top:766.70px;width:45.0px;height:1px;background:#a2c6e6"></div>
<div class="t" style="left:4px;top:748.15px;font-size:13.2px;color:#14304f">60</div>
<div class="a" style="left:0;top:787.05px;width:45.0px;height:1px;background:#a2c6e6"></div>
<div class="t" style="left:4px;top:768.50px;font-size:13.2px;color:#14304f">60</div>
<div class="a" style="left:0;top:807.40px;width:45.0px;height:1px;background:#a2c6e6"></div>
<div class="t" style="left:4px;top:788.85px;font-size:13.2px;color:#14304f">60</div>
</div>
<div class="a" style="left:1040.2px;top:79.0px;width:1px;height:809.0px;background:rgba(190,190,190,0.6)"></div>
<div class="a" style="left:1041.2px;top:79.0px;width:567.20px;height:809.0px;overflow:hidden;background:#96d0ff">
<div class="a" style="left:0;top:13.75px;width:571.2px;height:1px;background:#a2c6e6"></div>
<div class="m" style="left:115.60px;top:-5.80px;color:#17243a">add (16|M16) r22.0&lt;1&gt;:d r34.0&lt;8;8,1&gt;:d -r30.0&lt;0;1,0&gt;:d</div>
<div class="a" style="left:0;top:34.10px;width:571.2px;height:1px;background:#a2c6e6"></div>
<div class="m" style="left:115.60px;top:14.55px;color:#17243a">add (16|M16) r24.0&lt;1&gt;:d r34.0&lt;8;8,1&gt;:d r30.0&lt;0;1,0&gt;:d</div>
<div class="a" style="left:0;top:54.45px;width:571.2px;height:1px;background:#a2c6e6"></div>
<div class="m" style="left:115.60px;top:34.90px;color:#17243a">add (16|M16) r26.0&lt;1&gt;:d r92.0&lt;8;8,1&gt;:d -4:w</div>
<div class="a" style="left:0;top:55.45px;width:571.2px;height:20.35px;background:#fff"></div>
<div class="a" style="left:0;top:74.80px;width:571.2px;height:1px;background:#dadada"></div>
<div class="m" style="left:115.60px;top:55.25px;color:#262626">add (16|M16) r36.0&lt;1&gt;:d r12.0&lt;8;8,1&gt;:d r4.0&lt;8;8,1&gt;:d</div>
<div class="a" style="left:0;top:95.15px;width:571.2px;height:1px;background:#a2c6e6"></div>
<div class="m" style="left:115.60px;top:75.60px;color:#17243a">add (16|M0) r4.0&lt;1&gt;:d r10.0&lt;8;8,1&gt;:d -r102.0&lt;0;1,0&gt;:d {Compacted}</div>
<div class="a" style="left:0;top:115.50px;width:571.2px;height:1px;background:#a2c6e6"></div>
<div class="m" style="left:115.60px;top:95.95px;color:#17243a">shl (16|M0) r16.0&lt;1&gt;:d r16.0&lt;8;8,1&gt;:d 2:w</div>
<div class="a" style="left:0;top:135.85px;width:571.2px;height:1px;background:#a2c6e6"></div>
<div class="m" style="left:115.60px;top:116.30px;color:#17243a">add (16|M0) r12.0&lt;1&gt;:d r10.0&lt;8;8,1&gt;:d r102.0&lt;0;1,0&gt;:d {Compacted}</div>
<div class="a" style="left:0;top:156.20px;width:571.2px;height:1px;background:#a2c6e6"></div>
<div class="m" style="left:115.60px;top:136.65px;color:#17243a">shl (16|M0) r28.0&lt;1&gt;:d r28.0&lt;8;8,1&gt;:d 2:w</div>
<div class="a" style="left:0;top:176.55px;width:571.2px;height:1px;background:#a2c6e6"></div>
<div class="m" style="left:115.60px;top:157.00px;color:#17243a">add (16|M0) r14.0&lt;1&gt;:d r6.0&lt;8;8,1&gt;:d r14.0&lt;8;8,1&gt;:d {Compacted}</div>
<div class="a" style="left:0;top:196.90px;width:571.2px;height:1px;background:#a2c6e6"></div>
<div class="m" style="left:115.60px;top:177.35px;color:#17243a">add (16|M16) r18.0&lt;1&gt;:d r34.0&lt;8;8,1&gt;:d -r102.0&lt;0;1,0&gt;:d</div>
<div class="a" style="left:0;top:217.25px;width:571.2px;height:1px;background:#a2c6e6"></div>
<div class="m" style="left:115.60px;top:197.70px;color:#17243a">shl (16|M16) r22.0&lt;1&gt;:d r22.0&lt;8;8,1&gt;:d 2:w</div>
<div class="a" style="left:0;top:237.60px;width:571.2px;height:1px;background:#a2c6e6"></div>
<div class="m" style="left:115.60px;top:218.05px;color:#17243a">add (16|M16) r20.0&lt;1&gt;:d r34.0&lt;8;8,1&gt;:d r102.0&lt;0;1,0&gt;:d</div>
<div class="a" style="left:0;top:257.95px;width:571.2px;height:1px;background:#a2c6e6"></div>
<div class="m" style="left:115.60px;top:238.40px;color:#17243a">shl (16|M16) r24.0&lt;1&gt;:d r24.0&lt;8;8,1&gt;:d 2:w</div>
<div class="a" style="left:0;top:278.30px;width:571.2px;height:1px;background:#a2c6e6"></div>
<div class="m" style="left:115.60px;top:258.75px;color:#17243a">add (16|M16) r26.0&lt;1&gt;:d r36.0&lt;8;8,1&gt;:d r26.0&lt;8;8,1&gt;:d</div>
<div class="a" style="left:0;top:279.30px;width:571.2px;height:20.35px;background:#fff"></div>
<div class="a" style="left:0;top:298.65px;width:571.2px;height:1px;background:#dadada"></div>
<div class="m" style="left:115.60px;top:279.10px;color:#262626">add (16|M0) r2.0&lt;1&gt;:d r6.0&lt;8;8,1&gt;:d r94.0&lt;8;8,1&gt;:d {Compacted}</div>
<div class="a" style="left:0;top:319.00px;width:571.2px;height:1px;background:#a2c6e6"></div>
<div class="m" style="left:115.60px;top:299.45px;color:#17243a">shl (16|M0) r4.0&lt;1&gt;:d r4.0&lt;8;8,1&gt;:d 2:w</div>
<div class="a" style="left:0;top:339.35px;width:571.2px;height:1px;background:#a2c6e6"></div>
<div class="m" style="left:115.60px;top:319.80px;color:#17243a">add (16|M0) r16.0&lt;1&gt;:d r6.0&lt;8;8,1&gt;:d r16.0&lt;8;8,1&gt;:d {Compacted}</div>
<div class="a" style="left:0;top:359.70px;width:571.2px;height:1px;background:#a2c6e6"></div>
<div class="m" style="left:115.60px;top:340.15px;color:#17243a">shl (16|M0) r12.0&lt;1&gt;:d r12.0&lt;8;8,1&gt;:d 2:w</div>
<div class="a" style="left:0;top:380.05px;width:571.2px;height:1px;background:#a2c6e6"></div>
<div class="m" style="left:115.60px;top:360.50px;color:#17243a">add (16|M0) r28.0&lt;1&gt;:d r6.0&lt;8;8,1&gt;:d r28.0&lt;8;8,1&gt;:d {Compacted}</div>
<div class="a" style="left:0;top:400.40px;width:571.2px;height:1px;background:#a2c6e6"></div>
<div class="m" style="left:115.60px;top:380.85px;color:#17243a">add (16|M0) r14.0&lt;1&gt;:d r14.0&lt;8;8,1&gt;:d -12:w</div>
<div class="a" style="left:0;top:401.40px;width:571.2px;height:20.35px;background:#fff"></div>
<div class="a" style="left:0;top:420.75px;width:571.2px;height:1px;background:#dadada"></div>
<div class="m" style="left:115.60px;top:401.20px;color:#262626">add (16|M16) r31.0&lt;1&gt;:d r36.0&lt;8;8,1&gt;:d r92.0&lt;8;8,1&gt;:d</div>
<div class="a" style="left:0;top:441.10px;width:571.2px;height:1px;background:#a2c6e6"></div>
<div class="m" style="left:115.60px;top:421.55px;color:#17243a">shl (16|M16) r18.0&lt;1&gt;:d r18.0&lt;8;8,1&gt;:d 2:w</div>
<div class="a" style="left:0;top:461.45px;width:571.2px;height:1px;background:#a2c6e6"></div>
<div class="m" style="left:115.60px;top:441.90px;color:#17243a">add (16|M16) r22.0&lt;1&gt;:d r36.0&lt;8;8,1&gt;:d r22.0&lt;8;8,1&gt;:d</div>
<div class="a" style="left:0;top:481.80px;width:571.2px;height:1px;background:#a2c6e6"></div>
<div class="m" style="left:115.60px;top:462.25px;color:#17243a">shl (16|M16) r20.0&lt;1&gt;:d r20.0&lt;8;8,1&gt;:d 2:w</div>
<div class="a" style="left:0;top:502.15px;width:571.2px;height:1px;background:#a2c6e6"></div>
<div class="m" style="left:115.60px;top:482.60px;color:#17243a">add (16|M16) r24.0&lt;1&gt;:d r36.0&lt;8;8,1&gt;:d r24.0&lt;8;8,1&gt;:d</div>
<div class="a" style="left:0;top:522.50px;width:571.2px;height:1px;background:#a2c6e6"></div>
<div class="m" style="left:115.60px;top:502.95px;color:#17243a">add (16|M16) r26.0&lt;1&gt;:d r26.0&lt;8;8,1&gt;:d -12:w</div>
<div class="a" style="left:0;top:523.50px;width:571.2px;height:20.35px;background:#fff"></div>
<div class="a" style="left:0;top:542.85px;width:571.2px;height:1px;background:#dadada"></div>
<div class="m" style="left:115.60px;top:523.30px;color:#262626">send (16|M0) r48:w r2 0xC 0x4805001 [Data Cache Data Point]</div>
<div class="a" style="left:0;top:563.20px;width:571.2px;height:1px;background:#a2c6e6"></div>
<div class="m" style="left:115.60px;top:543.65px;color:#17243a">send (16|M0) r16:w r16 0xC 0x4205E01 [Data Cache Data Point]</div>
<div class="a" style="left:0;top:583.55px;width:571.2px;height:1px;background:#a2c6e6"></div>
<div class="m" style="left:115.60px;top:564.00px;color:#17243a">send (16|M0) r2:w r28 0xC 0x4205E01 [Data Cache Data Point]</div>
<div class="a" style="left:0;top:603.90px;width:571.2px;height:1px;background:#a2c6e6"></div>
<div class="m" style="left:115.60px;top:584.35px;color:#17243a">add (16|M0) r4.0&lt;1&gt;:d r6.0&lt;8;8,1&gt;:d r4.0&lt;8;8,1&gt;:d {Compacted}</div>
<div class="a" style="left:0;top:624.25px;width:571.2px;height:1px;background:#a2c6e6"></div>
<div class="m" style="left:115.60px;top:604.70px;color:#17243a">send (16|M0) r74:w r14 0xC 0x4805001 [Data Cache Data Point]</div>
<div class="a" style="left:0;top:644.60px;width:571.2px;height:1px;background:#a2c6e6"></div>
<div class="m" style="left:115.60px;top:625.05px;color:#17243a">add (16|M0) r12.0&lt;1&gt;:d r6.0&lt;8;8,1&gt;:d r12.0&lt;8;8,1&gt;:d {Compacted}</div>
<div class="a" style="left:0;top:645.60px;width:571.2px;height:20.35px;background:#fff"></div>
<div class="a" style="left:0;top:664.95px;width:571.2px;height:1px;background:#dadada"></div>
<div class="m" style="left:115.60px;top:645.40px;color:#262626">send (16|M16) r56:w r31 0xC 0x4805001 [Data Cache Data Point]</div>
<div class="a" style="left:0;top:685.30px;width:571.2px;height:1px;background:#a2c6e6"></div>
<div class="m" style="left:115.60px;top:665.75px;color:#17243a">send (16|M16) r28:w r22 0xC 0x4205E01 [Data Cache Data Point]</div>
<div class="a" style="left:0;top:705.65px;width:571.2px;height:1px;background:#a2c6e6"></div>
<div class="m" style="left:115.60px;top:686.10px;color:#17243a">send (16|M16) r22:w r24 0xC 0x4205E01 [Data Cache Data Point]</div>
<div class="a" style="left:0;top:726.00px;width:571.2px;height:1px;background:#a2c6e6"></div>
<div class="m" style="left:115.60px;top:706.45px;color:#17243a">add (16|M16) r18.0&lt;1&gt;:d r36.0&lt;8;8,1&gt;:d r18.0&lt;8;8,1&gt;:d</div>
<div class="a" style="left:0;top:746.35px;width:571.2px;height:1px;background:#a2c6e6"></div>
<div class="m" style="left:115.60px;top:726.80px;color:#17243a">send (16|M16) r66:w r26 0xC 0x4805001 [Data Cache Data Point]</div>
<div class="a" style="left:0;top:766.70px;width:571.2px;height:1px;background:#a2c6e6"></div>
<div class="m" style="left:115.60px;top:747.15px;color:#17243a">add (16|M16) r20.0&lt;1&gt;:d r36.0&lt;8;8,1&gt;:d r20.0&lt;8;8,1&gt;:d</div>
<div class="a" style="left:0;top:787.05px;width:571.2px;height:1px;background:#a2c6e6"></div>
<div class="m" style="left:115.60px;top:767.50px;color:#17243a">send (16|M0) r14:w r12 0xC 0x4205E01 [Data Cache Data Point]</div>
<div class="a" style="left:0;top:807.40px;width:571.2px;height:1px;background:#a2c6e6"></div>
<div class="m" style="left:115.60px;top:787.85px;color:#17243a">send (16|M0) r12:w r4 0xC 0x4205E01 [Data Cache Data Point]</div>
</div>
<div class="a" style="left:1608.4px;top:59.0px;width:1px;height:829.0px;background:#7c7c7c"></div>
<div class="a" style="left:1611px;top:59.0px;width:1px;height:829.0px;background:#8e8e8e"></div>
<div class="a" style="left:1612px;top:79.0px;width:158.00px;height:809.0px;overflow:hidden;background:#96d0ff">
<div class="a" style="left:0;top:13.75px;width:162px;height:1px;background:#a2c6e6"></div>
<div class="t" style="left:95.3px;top:-4.80px;font-size:13.2px;color:#14304f">8388608000</div>
<div class="a" style="left:0;top:34.10px;width:162px;height:1px;background:#a2c6e6"></div>
<div class="t" style="left:95.3px;top:15.55px;font-size:13.2px;color:#14304f">8388608000</div>
<div class="a" style="left:0;top:54.45px;width:162px;height:1px;background:#a2c6e6"></div>
<div class="t" style="left:95.3px;top:35.90px;font-size:13.2px;color:#14304f">8388608000</div>
<div class="a" style="left:0;top:55.45px;width:162px;height:20.35px;background:#fbe8d5"></div>
<div class="a" style="left:0;top:74.80px;width:162px;height:1px;background:#e0d2c2"></div>
<div class="t" style="left:95.3px;top:56.25px;font-size:13.2px;color:#2a2a2a">8388608000</div>
<div class="a" style="left:0;top:95.15px;width:162px;height:1px;background:#a2c6e6"></div>
<div class="t" style="left:95.3px;top:76.60px;font-size:13.2px;color:#14304f">8388608000</div>
<div class="a" style="left:0;top:115.50px;width:162px;height:1px;background:#a2c6e6"></div>
<div class="t" style="left:95.3px;top:96.95px;font-size:13.2px;color:#14304f">8388608000</div>
<div class="a" style="left:0;top:135.85px;width:162px;height:1px;background:#a2c6e6"></div>
<div class="t" style="left:95.3px;top:117.30px;font-size:13.2px;color:#14304f">8388608000</div>
<div class="a" style="left:0;top:156.20px;width:162px;height:1px;background:#a2c6e6"></div>
<div class="t" style="left:95.3px;top:137.65px;font-size:13.2px;color:#14304f">8388608000</div>
<div class="a" style="left:0;top:176.55px;width:162px;height:1px;background:#a2c6e6"></div>
<div class="t" style="left:95.3px;top:158.00px;font-size:13.2px;color:#14304f">8388608000</div>
<div class="a" style="left:0;top:196.90px;width:162px;height:1px;background:#a2c6e6"></div>
<div class="t" style="left:95.3px;top:178.35px;font-size:13.2px;color:#14304f">8388608000</div>
<div class="a" style="left:0;top:217.25px;width:162px;height:1px;background:#a2c6e6"></div>
<div class="t" style="left:95.3px;top:198.70px;font-size:13.2px;color:#14304f">8388608000</div>
<div class="a" style="left:0;top:237.60px;width:162px;height:1px;background:#a2c6e6"></div>
<div class="t" style="left:95.3px;top:219.05px;font-size:13.2px;color:#14304f">8388608000</div>
<div class="a" style="left:0;top:257.95px;width:162px;height:1px;background:#a2c6e6"></div>
<div class="t" style="left:95.3px;top:239.40px;font-size:13.2px;color:#14304f">8388608000</div>
<div class="a" style="left:0;top:278.30px;width:162px;height:1px;background:#a2c6e6"></div>
<div class="t" style="left:95.3px;top:259.75px;font-size:13.2px;color:#14304f">8388608000</div>
<div class="a" style="left:0;top:279.30px;width:162px;height:20.35px;background:#fbe8d5"></div>
<div class="a" style="left:0;top:298.65px;width:162px;height:1px;background:#e0d2c2"></div>
<div class="t" style="left:95.3px;top:280.10px;font-size:13.2px;color:#2a2a2a">8388608000</div>
<div class="a" style="left:0;top:319.00px;width:162px;height:1px;background:#a2c6e6"></div>
<div class="t" style="left:95.3px;top:300.45px;font-size:13.2px;color:#14304f">8388608000</div>
<div class="a" style="left:0;top:339.35px;width:162px;height:1px;background:#a2c6e6"></div>
<div class="t" style="left:95.3px;top:320.80px;font-size:13.2px;color:#14304f">8388608000</div>
<div class="a" style="left:0;top:359.70px;width:162px;height:1px;background:#a2c6e6"></div>
<div class="t" style="left:95.3px;top:341.15px;font-size:13.2px;color:#14304f">8388608000</div>
<div class="a" style="left:0;top:380.05px;width:162px;height:1px;background:#a2c6e6"></div>
<div class="t" style="left:95.3px;top:361.50px;font-size:13.2px;color:#14304f">8388608000</div>
<div class="a" style="left:0;top:400.40px;width:162px;height:1px;background:#a2c6e6"></div>
<div class="t" style="left:95.3px;top:381.85px;font-size:13.2px;color:#14304f">8388608000</div>
<div class="a" style="left:0;top:401.40px;width:162px;height:20.35px;background:#fbe8d5"></div>
<div class="a" style="left:0;top:420.75px;width:162px;height:1px;background:#e0d2c2"></div>
<div class="t" style="left:95.3px;top:402.20px;font-size:13.2px;color:#2a2a2a">8388608000</div>
<div class="a" style="left:0;top:441.10px;width:162px;height:1px;background:#a2c6e6"></div>
<div class="t" style="left:95.3px;top:422.55px;font-size:13.2px;color:#14304f">8388608000</div>
<div class="a" style="left:0;top:461.45px;width:162px;height:1px;background:#a2c6e6"></div>
<div class="t" style="left:95.3px;top:442.90px;font-size:13.2px;color:#14304f">8388608000</div>
<div class="a" style="left:0;top:481.80px;width:162px;height:1px;background:#a2c6e6"></div>
<div class="t" style="left:95.3px;top:463.25px;font-size:13.2px;color:#14304f">8388608000</div>
<div class="a" style="left:0;top:502.15px;width:162px;height:1px;background:#a2c6e6"></div>
<div class="t" style="left:95.3px;top:483.60px;font-size:13.2px;color:#14304f">8388608000</div>
<div class="a" style="left:0;top:522.50px;width:162px;height:1px;background:#a2c6e6"></div>
<div class="t" style="left:95.3px;top:503.95px;font-size:13.2px;color:#14304f">8388608000</div>
<div class="a" style="left:0;top:523.50px;width:162px;height:20.35px;background:#fbe8d5"></div>
<div class="a" style="left:0;top:542.85px;width:162px;height:1px;background:#e0d2c2"></div>
<div class="t" style="left:88.0px;top:524.30px;font-size:13.2px;color:#2a2a2a">64566332190</div>
<div class="a" style="left:0;top:563.20px;width:162px;height:1px;background:#a2c6e6"></div>
<div class="t" style="left:88.0px;top:544.65px;font-size:13.2px;color:#14304f">64566332190</div>
<div class="a" style="left:0;top:583.55px;width:162px;height:1px;background:#a2c6e6"></div>
<div class="t" style="left:88.0px;top:565.00px;font-size:13.2px;color:#14304f">64566332190</div>
<div class="a" style="left:0;top:603.90px;width:162px;height:1px;background:#a2c6e6"></div>
<div class="t" style="left:95.3px;top:585.35px;font-size:13.2px;color:#14304f">8388608000</div>
<div class="a" style="left:0;top:624.25px;width:162px;height:1px;background:#a2c6e6"></div>
<div class="t" style="left:88.0px;top:605.70px;font-size:13.2px;color:#14304f">64566332190</div>
<div class="a" style="left:0;top:644.60px;width:162px;height:1px;background:#a2c6e6"></div>
<div class="t" style="left:95.3px;top:626.05px;font-size:13.2px;color:#14304f">8388608000</div>
<div class="a" style="left:0;top:645.60px;width:162px;height:20.35px;background:#fbe8d5"></div>
<div class="a" style="left:0;top:664.95px;width:162px;height:1px;background:#e0d2c2"></div>
<div class="t" style="left:88.0px;top:646.40px;font-size:13.2px;color:#2a2a2a">64566332190</div>
<div class="a" style="left:0;top:685.30px;width:162px;height:1px;background:#a2c6e6"></div>
<div class="t" style="left:88.0px;top:666.75px;font-size:13.2px;color:#14304f">64566332190</div>
<div class="a" style="left:0;top:705.65px;width:162px;height:1px;background:#a2c6e6"></div>
<div class="t" style="left:88.0px;top:687.10px;font-size:13.2px;color:#14304f">64566332190</div>
<div class="a" style="left:0;top:726.00px;width:162px;height:1px;background:#a2c6e6"></div>
<div class="t" style="left:95.3px;top:707.45px;font-size:13.2px;color:#14304f">8388608000</div>
<div class="a" style="left:0;top:746.35px;width:162px;height:1px;background:#a2c6e6"></div>
<div class="t" style="left:88.0px;top:727.80px;font-size:13.2px;color:#14304f">64566332190</div>
<div class="a" style="left:0;top:766.70px;width:162px;height:1px;background:#a2c6e6"></div>
<div class="t" style="left:95.3px;top:748.15px;font-size:13.2px;color:#14304f">8388608000</div>
<div class="a" style="left:0;top:787.05px;width:162px;height:1px;background:#a2c6e6"></div>
<div class="t" style="left:88.0px;top:768.50px;font-size:13.2px;color:#14304f">64566332190</div>
<div class="a" style="left:0;top:807.40px;width:162px;height:1px;background:#a2c6e6"></div>
<div class="t" style="left:88.0px;top:788.85px;font-size:13.2px;color:#14304f">64566332190</div>
</div>
<div class="a" style="left:935px;top:59.0px;width:673.4px;height:21.0px;background:#f5f5f5;border-bottom:1px solid #7c7c7c"></div>
<div class="a" style="left:1612px;top:59.0px;width:158px;height:21.0px;background:#f5f5f5;border-bottom:1px solid #7c7c7c"></div>
<div class="a" style="left:998px;top:59.0px;width:1.4px;height:20.0px;background:#a6a6a6"></div>
<div class="a" style="left:1040px;top:59.0px;width:1.4px;height:20.0px;background:#a6a6a6"></div>
<div class="hdr" style="left:940px;top:60px">Addr…</div>
<svg class="a" style="left:985px;top:65.4px" width="8" height="7" viewBox="0 0 8 7"><path d="M4 0.4L7.6 6.6H0.4Z" fill="#505050"/></svg>
<div class="hdr" style="left:1006.6px;top:60px">So…</div>
<div class="hdr" style="left:1041.2px;width:567.2px;text-align:center;top:60px">Assembly</div>
<svg class="a" style="left:1627.3px;top:60.8px" width="10.2" height="15" viewBox="0 0 11 16" preserveAspectRatio="none"><path d="M2.7 5.6C1.2 7.8 0.3 9.9 0.4 12.1C0.5 14.3 1.8 15.6 3.2 15.6C4.4 15.6 5.1 14.6 5.1 13.2C5.1 10.9 4.1 8.3 2.7 5.6Z" fill="#d58a14"/><path d="M8.1 6.6C9.6 8.8 10.3 10.9 10.2 12.7C10.1 14.5 9.1 15.6 7.8 15.6C6.6 15.6 5.8 14.6 5.8 13.2C5.8 11.3 6.8 9.2 8.1 6.6Z" fill="#d6840c"/><path d="M5.6 0.6C6.7 2.4 7.2 4.6 7 7.2C6.8 9.8 6.2 11.8 5.5 13.8C4.8 11.8 4.1 9.6 4.1 7.2C4.1 4.9 4.8 2.7 5.6 0.6Z" fill="#df9418"/><ellipse cx="5.45" cy="13.6" rx="1.1" ry="1.6" fill="#f6c45a"/></svg>
<div class="hdr" style="left:1642.4px;top:60px">Estimated GPU Cycles</div>
<div class="a" style="left:0;top:0;width:2px;height:888px;background:#fff"></div>
<div class="a" style="left:1770px;top:0;width:6px;height:888px;background:#fff"></div>
</body></html>
